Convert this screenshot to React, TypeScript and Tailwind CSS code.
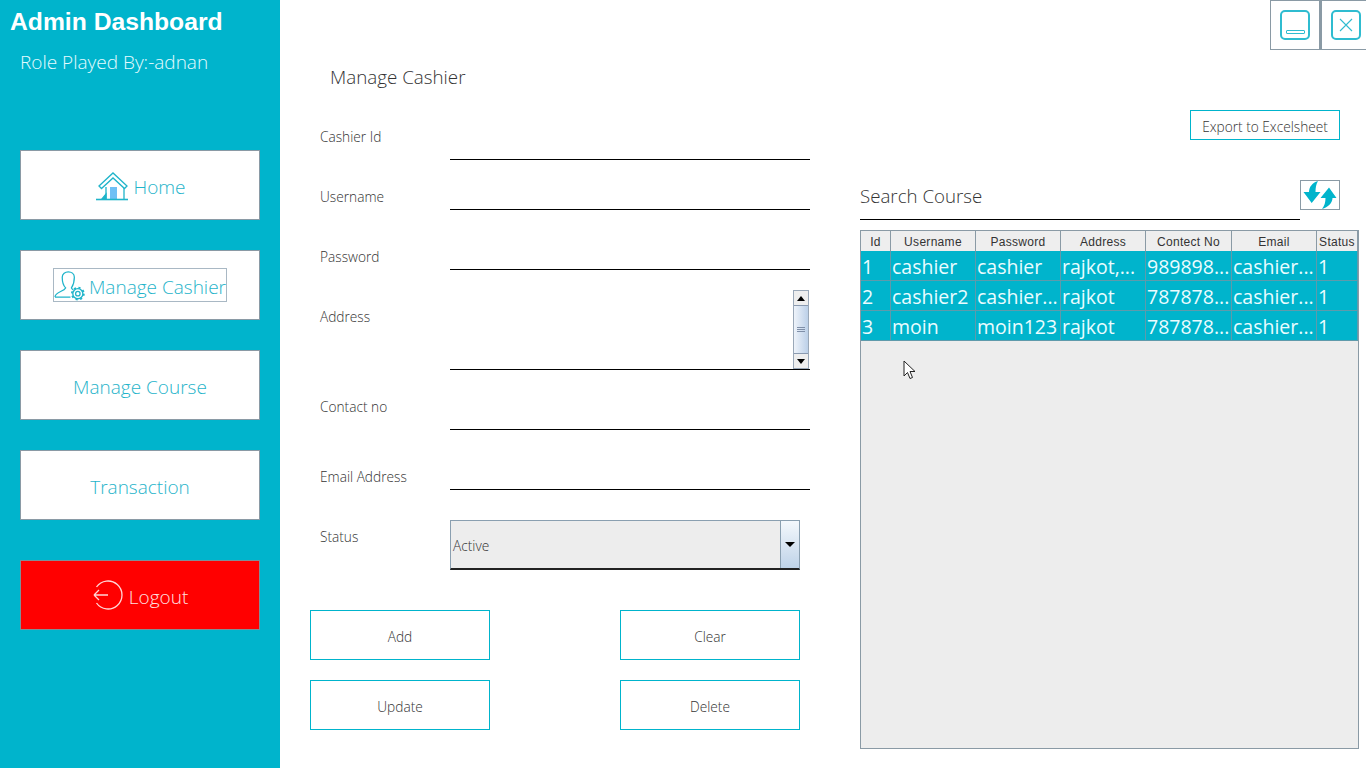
import type { ReactNode } from "react";

const LIGHT = "font-['Open_Sans','Liberation_Sans',sans-serif] font-light";

const HomeIcon = () => (
  <svg width="34" height="30" viewBox="0 0 34 30" fill="none" stroke="#1fb4ca" strokeWidth="1.300">
    <path d="M3 14 L17 1 L31 14 L28.500 16.500 L17 6 L5.500 16.500 Z" />
    <path d="M10 15 V27 M28 16 V27" />
    <rect x="14" y="15" width="7" height="12" fill="#6fc0f5" stroke="none" />
    <path d="M0 27.500 H32" strokeWidth="1.600" />
    <path d="M6 27 L10 22 V27 Z" fill="#1fb4ca" />
  </svg>
);

const UserGearIcon = () => (
  <svg width="34" height="32" viewBox="0 0 34 32" fill="none" stroke="#1fb4ca" strokeWidth="1.300">
    <path d="M1 28.500 C1 23 10 23 12 19 C9 16 8.500 11 8.500 8 C8.500 0.500 21 0.500 21 8 C21 11 20 16 18 19 C18.500 20 19 20.500 20 21 M1 28.500 H17" />
    <circle cx="24.600" cy="25" r="2.300" />
    <circle cx="24.600" cy="25" r="5.200" strokeWidth="1.400" />
    <circle cx="24.600" cy="25" r="6.200" strokeWidth="1.800" strokeDasharray="2.200 2.650" />
  </svg>
);

const LogoutIcon = () => (
  <svg width="32" height="32" viewBox="0 0 32 32" fill="none" stroke="#ffd6d6" strokeWidth="1.300">
    <path d="M4.500 8 A14 14 0 1 1 4.500 24" />
    <path d="M2 16 H16 M2 16 L7 11 M2 16 L7 21" />
  </svg>
);

const RefreshIcon = () => (
  <svg width="34" height="28" viewBox="0 0 34 28" fill="#00b4cc">
    <path d="M15 0 C9 2 6 6 6 11 H0.500 L8.700 22 L17.500 11 H12.500 C12.500 7 13 3 15 0 Z" />
    <path d="M19 28 C25 26 29.500 22 29.500 17 H33.500 L26 6.500 L17.500 17 H22.500 C22.500 21 21.500 25 19 28 Z" />
  </svg>
);

function NavButton({ children, extra = "" }: { children: ReactNode; extra?: string }) {
  return (
    <div className={`h-[70px] w-[240px] bg-white border border-[#8a9aa5] pt-[4px] flex items-center justify-center text-[19px] text-[#1fb4ca] ${LIGHT} ${extra}`}>
      {children}
    </div>
  );
}

function FormRow({ label, className, children }: { label: string; className: string; children?: ReactNode }) {
  return (
    <div className={`flex pl-[40px] ${className}`}>
      <div className={`w-[130px] text-[13.7px] leading-[20px] text-[#333] ${LIGHT}`}>{label}</div>
      {children}
    </div>
  );
}

function OutlineButton({ label }: { label: string }) {
  return (
    <div className={`w-[180px] h-[50px] pt-[4px] border border-[#00b4cc] flex items-center justify-center text-[13.7px] text-[#333] ${LIGHT}`}>
      {label}
    </div>
  );
}

const columns = ["w-[30px]", "w-[85px]", "w-[85px]", "w-[85px]", "w-[86px]", "w-[85px]", "w-[41px]"];
const headers = ["Id", "Username", "Password", "Address", "Contect No", "Email", "Status"];
const rows = [
  ["1", "cashier", "cashier", "rajkot,...", "989898...", "cashier...", "1"],
  ["2", "cashier2", "cashier...", "rajkot", "787878...", "cashier...", "1"],
  ["3", "moin", "moin123", "rajkot", "787878...", "cashier...", "1"],
];

export default function App() {
  return (
    <div className="w-[1366px] h-[768px] flex overflow-hidden bg-white">
      {/* sidebar */}
      <div className="w-[280px] h-full bg-[#00b4cc] flex flex-col pl-[20px]">
        <h1 className="-ml-[10px] mt-[7px] h-[30px] text-[24.7px] leading-[30px] font-bold text-white font-['Liberation_Sans',sans-serif]">
          Admin Dashboard
        </h1>
        <p className={`mt-[11px] text-[19px] leading-[28px] text-[#e4fbff] ${LIGHT}`}>Role Played By:-adnan</p>
        <div className="mt-[74px] flex flex-col gap-[30px]">
          <NavButton>
            <span className="ml-[2px] flex">
              <HomeIcon />
            </span>
            <span className="ml-[3px]">Home</span>
          </NavButton>
          <NavButton>
            <div className="-mt-[4px] w-[174px] h-[34px] border border-[#a9b8c4] flex items-center whitespace-nowrap overflow-hidden">
              <UserGearIcon />
              <span className="ml-[2px] mt-[4px]">Manage Cashier</span>
            </div>
          </NavButton>
          <NavButton>Manage Course</NavButton>
          <NavButton>Transaction</NavButton>
        </div>
        <div className={`mt-[40px] w-[240px] h-[70px] bg-[#ff0000] border border-[#7f8f96] flex items-center justify-center text-[19px] text-[#ffe0e0] ${LIGHT}`}>
          <LogoutIcon />
          <span className="ml-[5px] mt-[4px]">Logout</span>
        </div>
      </div>

      {/* form */}
      <div className="w-[580px] h-full flex flex-col">
        <h2 className={`mt-[63px] ml-[50px] text-[18.8px] leading-[28px] text-[#333] ${LIGHT}`}>Manage Cashier</h2>
        <FormRow label="Cashier Id" className="mt-[29px] h-[40px] pt-[7px]">
          <div className="w-[360px] -mt-[7px] h-[40px] border-b border-black" />
        </FormRow>
        <FormRow label="Username" className="mt-[20px] h-[30px] pt-[7px]">
          <div className="w-[360px] -mt-[7px] h-[30px] border-b border-black" />
        </FormRow>
        <FormRow label="Password" className="mt-[30px] h-[30px] pt-[7px]">
          <div className="w-[360px] -mt-[7px] h-[30px] border-b border-black" />
        </FormRow>
        <FormRow label="Address" className="mt-[20px] h-[80px] pt-[17px]">
          <div className="w-[360px] -mt-[17px] h-[80px] border-b border-black flex justify-end pr-[1px]">
            <div className="w-[16px] h-[79px] flex flex-col border border-[#9aa8b8]">
              <div className="h-[14px] bg-[#eeeeee] flex items-center justify-center">
                <div className="w-0 h-0 border-x-[4px] border-x-transparent border-b-[5px] border-b-black" />
              </div>
              <div className="flex-1 bg-gradient-to-r from-[#eef3fa] to-[#bcd0e8] border-y border-[#8a9ab0] flex flex-col items-center justify-center gap-[1px]">
                <div className="w-[8px] h-px bg-[#7f8fa8]" />
                <div className="w-[8px] h-px bg-[#7f8fa8]" />
                <div className="w-[8px] h-px bg-[#7f8fa8]" />
              </div>
              <div className="h-[14px] bg-[#eeeeee] flex items-center justify-center">
                <div className="w-0 h-0 border-x-[4px] border-x-transparent border-t-[5px] border-t-black" />
              </div>
            </div>
          </div>
        </FormRow>
        <FormRow label="Contact no" className="mt-[20px] h-[40px] pt-[7px]">
          <div className="w-[360px] -mt-[7px] h-[40px] border-b border-black" />
        </FormRow>
        <FormRow label="Email Address" className="mt-[30px] h-[30px] pt-[7px]">
          <div className="w-[360px] -mt-[7px] h-[30px] border-b border-black" />
        </FormRow>
        <FormRow label="Status" className="mt-[30px] h-[50px] pt-[7px]">
          <div className="w-[350px] -mt-[7px] h-[50px] flex bg-[#ededed] border border-[#8a9fb0] border-b-2 border-b-[#222]">
            <div className={`flex-1 pl-[2px] pt-[4px] flex items-center text-[13.7px] text-[#333] ${LIGHT}`}>Active</div>
            <div className="w-[19px] border-l border-[#8a9fb0] bg-gradient-to-b from-[#f4f8fc] to-[#bfd3e8] flex items-center justify-center">
              <div className="w-0 h-0 border-x-[5px] border-x-transparent border-t-[5px] border-t-black" />
            </div>
          </div>
        </FormRow>
        <div className="mt-[40px] ml-[30px] flex gap-[130px]">
          <OutlineButton label="Add" />
          <OutlineButton label="Clear" />
        </div>
        <div className="mt-[20px] ml-[30px] flex gap-[130px]">
          <OutlineButton label="Update" />
          <OutlineButton label="Delete" />
        </div>
      </div>

      {/* right side */}
      <div className="w-[506px] h-full flex flex-col">
        <div className="flex justify-end h-[50px]">
          <div className="w-[50px] h-[50px] border border-[#8a9aa5] flex items-center justify-center">
            <div className="w-[30px] h-[30px] rounded-[5px] border-2 border-[#2fbcd0] flex items-end justify-center pb-[4px]">
              <div className="w-[19px] h-[4px] rounded-[1px] border border-[#2fbcd0]" />
            </div>
          </div>
          <div className="w-[46px] h-[50px] border-l-2 border-y border-[#8a9aa5] flex items-center pl-[9px]">
            <div className="w-[30px] h-[30px] rounded-[5px] border-2 border-[#2fbcd0] flex items-center justify-center">
              <svg width="16" height="16" viewBox="0 0 16 16" stroke="#2fbcd0" strokeWidth="1.100">
                <path d="M2 2 L14 14 M14 2 L2 14" />
              </svg>
            </div>
          </div>
        </div>
        <div className="mt-[60px] flex justify-end pr-[26px]">
          <div className={`w-[150px] h-[30px] pt-[4px] border border-[#00b4cc] flex items-center justify-center text-[13.7px] text-[#333] ${LIGHT}`}>
            Export to Excelsheet
          </div>
        </div>
        <div className="mt-[40px] flex items-start">
          <div className={`w-[440px] h-[40px] border-b border-black pt-[2px] text-[18.7px] leading-[28px] text-[#333] ${LIGHT}`}>
            Search Course
          </div>
          <div className="w-[40px] h-[30px] border border-[#8a9aa5] flex items-center justify-center">
            <RefreshIcon />
          </div>
        </div>
        <div className="relative mt-[10px] w-[499px] h-[519px] bg-[#ededed] border border-[#8a9aa5]">
          <table className="table-fixed border-separate border-spacing-0 w-[497px]">
            <colgroup>
              {columns.map((c, i) => (
                <col key={i} className={c} />
              ))}
            </colgroup>
            <thead>
              <tr className="h-[20px]">
                {headers.map((h) => (
                  <th
                    key={h}
                    className="p-0 pt-[2px] border-r border-[#8a9aa5] bg-[#eeeeee] text-[12px] leading-[18px] tracking-[0.3px] font-normal text-[#333] font-['Liberation_Sans',sans-serif]"
                  >
                    {h}
                  </th>
                ))}
              </tr>
            </thead>
            <tbody>
              {rows.map((row) => (
                <tr key={row[0]} className="h-[30px]">
                  {row.map((cell, i) => (
                    <td
                      key={i}
                      className="p-0 pl-[1px] pt-[2px] border-r border-b border-[#5f9aab] bg-[#00b4cc] text-[19.5px] leading-[27px] text-[#eafcff] whitespace-nowrap overflow-hidden font-['Open_Sans','Liberation_Sans',sans-serif]"
                    >
                      {cell}
                    </td>
                  ))}
                </tr>
              ))}
            </tbody>
          </table>
          <svg className="absolute left-[42px] top-[129px]" width="14" height="20" viewBox="0 0 14 20" fill="#fff" stroke="#222" strokeWidth="1">
            <path d="M1 1 V16 L4.500 12.500 L7 18.500 L9.500 17.500 L7 11.500 H12 Z" />
          </svg>
        </div>
      </div>
    </div>
  );
}
